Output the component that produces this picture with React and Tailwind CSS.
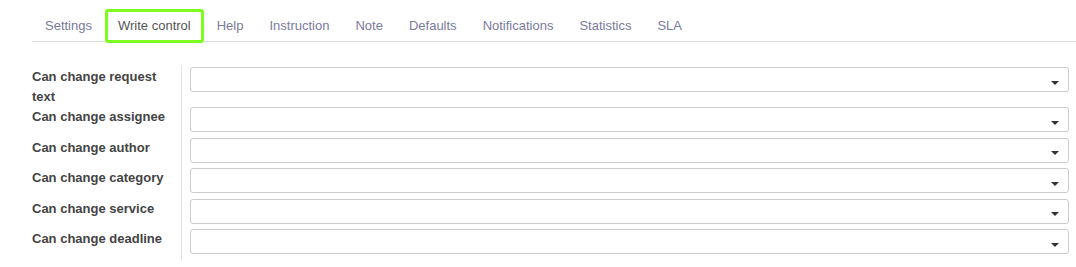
export default function App() {
    const tabs = ['Settings', 'Write control', 'Help', 'Instruction', 'Note', 'Defaults', 'Notifications', 'Statistics', 'SLA'];
    const active = 'Write control';

    const rows = [
        'Can change request text',
        'Can change assignee',
        'Can change author',
        'Can change category',
        'Can change service',
        'Can change deadline',
    ];

    return (
        <div className="w-[1076px] h-[267px] bg-white pl-[32px] font-['Liberation_Sans',Arial,sans-serif] text-[13px]">
            <div className="flex pt-[9px] h-[42px] border-b border-[#dddddd]">
                {tabs.map((t) => (
                    <div
                        key={t}
                        className={`h-[34px] px-[10px] flex items-center border-[3px] rounded-[3px] leading-[18px] ${
                            t === active ? 'border-[#7dfc1f] text-[#555555]' : 'border-transparent text-[#7a7a9c]'
                        }`}
                    >
                        {t}
                    </div>
                ))}
            </div>

            <div className="mt-[23px] flex flex-col">
                {rows.map((label, i) => (
                    <div key={label} className="flex">
                        <div
                            className={`w-[150px] shrink-0 border-r border-[#e2e2e2] pr-[4px] font-bold text-[#444444] leading-[20px] ${
                                i === 0 ? 'pt-[2px]' : ''
                            } ${i === rows.length - 1 ? 'pb-[3px]' : ''}`}
                        >
                            {label}
                        </div>
                        <div className={`flex-1 pl-[8px] pr-[7px] pb-[5.5px] ${i === 0 ? 'pt-[2px]' : ''}`}>
                            <div className="h-[25px] border border-[#cccccc] rounded-[3px] bg-white flex justify-end items-center pr-[9px]">
                                <span className="mt-[6px] w-0 h-0 border-l-[4px] border-r-[4px] border-t-[4px] border-l-transparent border-r-transparent border-t-[#333333]" />
                            </div>
                        </div>
                    </div>
                ))}
            </div>
        </div>
    );
}
